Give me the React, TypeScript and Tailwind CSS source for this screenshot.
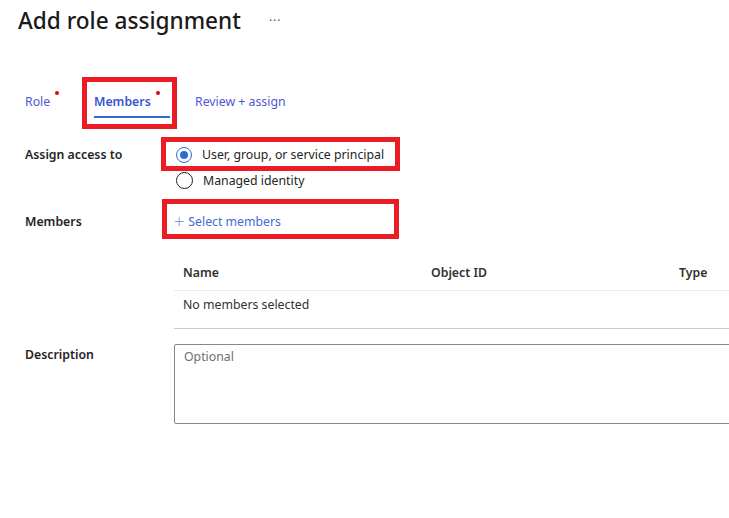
import React from "react";

const font = "font-['Segoe_UI','Noto_Sans','Open_Sans',sans-serif]";

const tabs = [
  { name: "Role", width: "w-[69px]", dot: true, active: false },
  { name: "Members", width: "w-[101px]", dot: true, active: true },
  { name: "Review + assign", width: "w-[140px]", dot: false, active: false },
];

const Radio = ({ checked, label }: { checked: boolean; label: string }) => (
  <div className="flex items-center h-[26px] ml-[2px] pt-[1px]">
    <div
      className={
        checked
          ? "w-[16px] h-[16px] rounded-full border border-[#2a6dd6] flex items-center justify-center"
          : "w-[17px] h-[17px] rounded-full border-[1.3px] border-[#222]"
      }
    >
      {checked && <div className="w-[8px] h-[8px] rounded-full bg-[#2a6dd6]" />}
    </div>
    <span className="ml-[10px] pt-[1px] text-[12.3px] text-[#242424]">{label}</span>
  </div>
);

const App = () => {
  return (
    <div className={`relative w-[729px] h-[518px] bg-white overflow-hidden ${font}`}>
      {/* header */}
      <div className="flex items-center h-[32px] mt-[5px] pl-[18px]">
        <h1 className="text-[22.6px] font-medium text-[#1b1a19] leading-[32px]">
          Add role assignment
        </h1>
        <span className="ml-[28px] text-[12px] text-[#605e5c] tracking-[1px]">···</span>
      </div>

      {/* tabs */}
      <div className="flex mt-[49px] pl-[25px] h-[32px]">
        {tabs.map((t) => (
          <div key={t.name} className={`${t.width} flex flex-col shrink-0`}>
            <div className="pt-[6px] h-[25px] flex items-start">
              <span
                className={
                  t.active
                    ? "text-[12.3px] leading-[20px] font-semibold text-[#3a55cf]"
                    : "text-[12.3px] leading-[20px] text-[#4f58d2]"
                }
              >
                {t.name}
              </span>
              {t.dot && <span className="ml-[5px] -mt-[1px] w-[4px] h-[4px] rounded-full bg-[#e3001b]" />}
            </div>
            {t.active && <div className="mt-[5px] w-[76px] h-[2px] bg-[#2f6fd0]" />}
          </div>
        ))}
      </div>

      {/* form */}
      <div className="flex flex-col mt-[23px] pl-[25px] text-[#242424]">
        <div className="flex">
          <div className="w-[149px] shrink-0 h-[26px] pt-[2px] flex items-center text-[12.3px] font-semibold">
            Assign access to
          </div>
          <div className="flex flex-col">
            <Radio checked label="User, group, or service principal" />
            <Radio checked={false} label="Managed identity" />
          </div>
        </div>

        <div className="flex mt-[15px]">
          <div className="w-[149px] shrink-0 h-[26px] pt-[2px] flex items-center text-[12.3px] font-semibold">
            Members
          </div>
          <div className="flex items-center h-[26px] pt-[2px] text-[12.3px] text-[#4668d4]">
            <span className="text-[18px] font-light text-[#7f97e0] leading-none mr-[4px] -mt-[2px]">+</span>
            Select members
          </div>
        </div>

        {/* members table */}
        <div className="mt-[20px] ml-[149px] w-[560px] shrink-0 text-[12.3px]">
          <div className="flex items-center h-[37px] pl-[9px] pt-[2px] border-b border-[#ebebeb] font-semibold text-[#323130]">
            <div className="w-[248px] shrink-0">Name</div>
            <div className="w-[248px] shrink-0">Object ID</div>
            <div>Type</div>
          </div>
          <div className="h-[38px] pl-[9px] pt-[4px] leading-[20px] border-b border-[#c8c8c8] text-[#323130]">
            No members selected
          </div>
        </div>

        <div className="flex mt-[15px]">
          <div className="w-[149px] shrink-0 h-[20px] pt-[2px] flex items-center text-[12.3px] font-semibold">
            Description
          </div>
          <div className="w-[570px] shrink-0 h-[80px] border border-[#8a8886] rounded-[2px] pl-[9px] pt-[3px] text-[12.3px] text-[#6e6e6e]">
            Optional
          </div>
        </div>
      </div>

      {/* highlight annotations */}
      <div className="absolute left-[82px] top-[77px] w-[95px] h-[52px] border-[5px] border-[#ec1c24]" />
      <div className="absolute left-[161px] top-[137px] w-[239px] h-[34px] border-[5px] border-[#ec1c24]" />
      <div className="absolute left-[162px] top-[199px] w-[237px] h-[40px] border-[5px] border-[#ec1c24]" />
    </div>
  );
};

export default App;
